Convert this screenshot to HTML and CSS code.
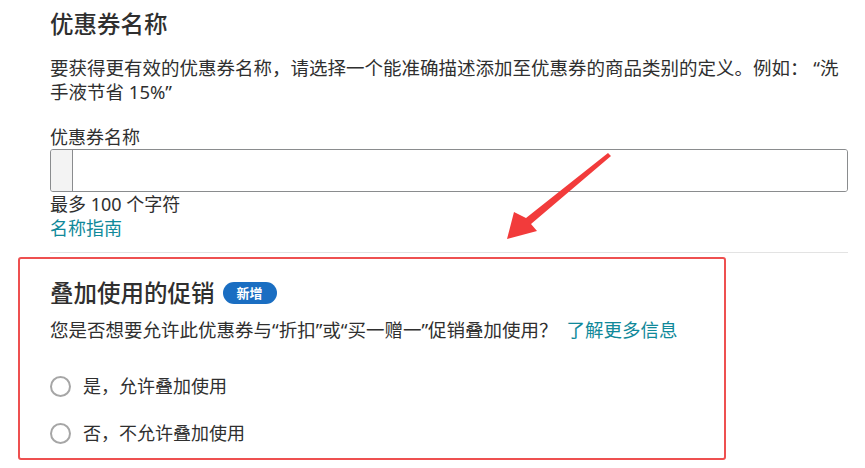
FILE: index.html
```html
<!DOCTYPE html>
<html lang="zh-CN">
<head>
<meta charset="UTF-8">
<meta name="viewport" content="width=device-width, initial-scale=1.0">
<title>优惠券名称</title>
<link rel="stylesheet" href="styles.css">
</head>
<body>
<div class="page">
<h2 class="title">优惠券名称</h2>
<p class="intro">要获得更有效的优惠券名称，请选择一个能准确描述添加至优惠券的商品类别的定义。例如： “洗手液节省 15%”</p>

<label class="field-label" for="coupon-name">优惠券名称</label>
<div class="input-box">
<span class="input-prefix"></span>
<input type="text" id="coupon-name">
</div>
<div class="hint">最多 100 个字符</div>
<a class="link" href="#">名称指南</a>
<div class="divider"></div>

<div class="stack-box">
<h2 class="title">叠加使用的促销<span class="badge">新增</span></h2>
<p class="question">您是否想要允许此优惠券与“折扣”或“买一赠一”促销叠加使用？ <a class="link" href="#">了解更多信息</a></p>
<div class="radios">
<label class="radio"><span class="circle"></span>是，允许叠加使用</label>
<label class="radio"><span class="circle"></span>否，不允许叠加使用</label>
</div>
</div>
</div>

<svg class="arrow" width="865" height="468" viewBox="0 0 865 468">
<polygon points="608,153 611,156 531,224 537,231 507,239 514,212 526,218" fill="#f23b3b"/>
</svg>
</body>
</html>
```

FILE: styles.css
```css
body {
font-family: "Noto Sans", "Noto Sans CJK SC", sans-serif;
margin: 0;
padding: 0;
background: #fff;
color: #2f2f2f;
}
.page {
padding: 8px 0 0 50px;
width: 798px;
}
.title {
font-size: 23.5px;
font-weight: 500;
line-height: 32px;
margin: 0;
display: flex;
align-items: center;
}
.intro {
font-size: 18.5px;
line-height: 24px;
margin: 16px 0 0;
}
.field-label {
display: block;
font-size: 18px;
line-height: 24px;
margin-top: 21px;
}
.input-box {
display: flex;
height: 41px;
border: 1px solid #8a8c8e;
border-radius: 3px;
box-shadow: inset 0 1px 2px rgba(0,0,0,0.12);
overflow: hidden;
}
.input-prefix {
width: 21px;
background: #f3f3f3;
border-right: 1px solid #8a8c8e;
}
.input-box input {
flex: 1;
border: none;
outline: none;
font-size: 18px;
padding: 0 8px;
}
.hint {
font-size: 18px;
line-height: 24px;
}
.link {
display: inline-block;
font-size: 18px;
line-height: 24px;
color: #10899a;
text-decoration: none;
}
.divider {
height: 1px;
background: #e3e3e3;
margin-top: 12px;
}
.stack-box {
margin: 4px 0 0 -32px;
width: 674px;
padding: 18px 0 13px 30px;
border: 2px solid #ee5050;
border-radius: 3px;
}
.badge {
display: inline-block;
margin-left: 8px;
width: 54px;
height: 22px;
line-height: 22px;
border-radius: 11px;
background: #1a6ec2;
color: #fff;
font-size: 13px;
font-weight: 700;
text-align: center;
}
.question {
font-size: 18.5px;
line-height: 24px;
margin: 9px 0 0;
}
.question .link {
margin-left: 4px;
font-size: 18.5px;
}
.radios {
display: flex;
flex-direction: column;
gap: 23px;
margin-top: 32px;
}
.radio {
display: flex;
align-items: center;
gap: 12px;
font-size: 18px;
line-height: 24px;
}
.circle {
width: 17px;
height: 17px;
border: 2px solid #a6a6a6;
border-radius: 50%;
}
.arrow {
position: absolute;
top: 0;
left: 0;
pointer-events: none;
}
```
